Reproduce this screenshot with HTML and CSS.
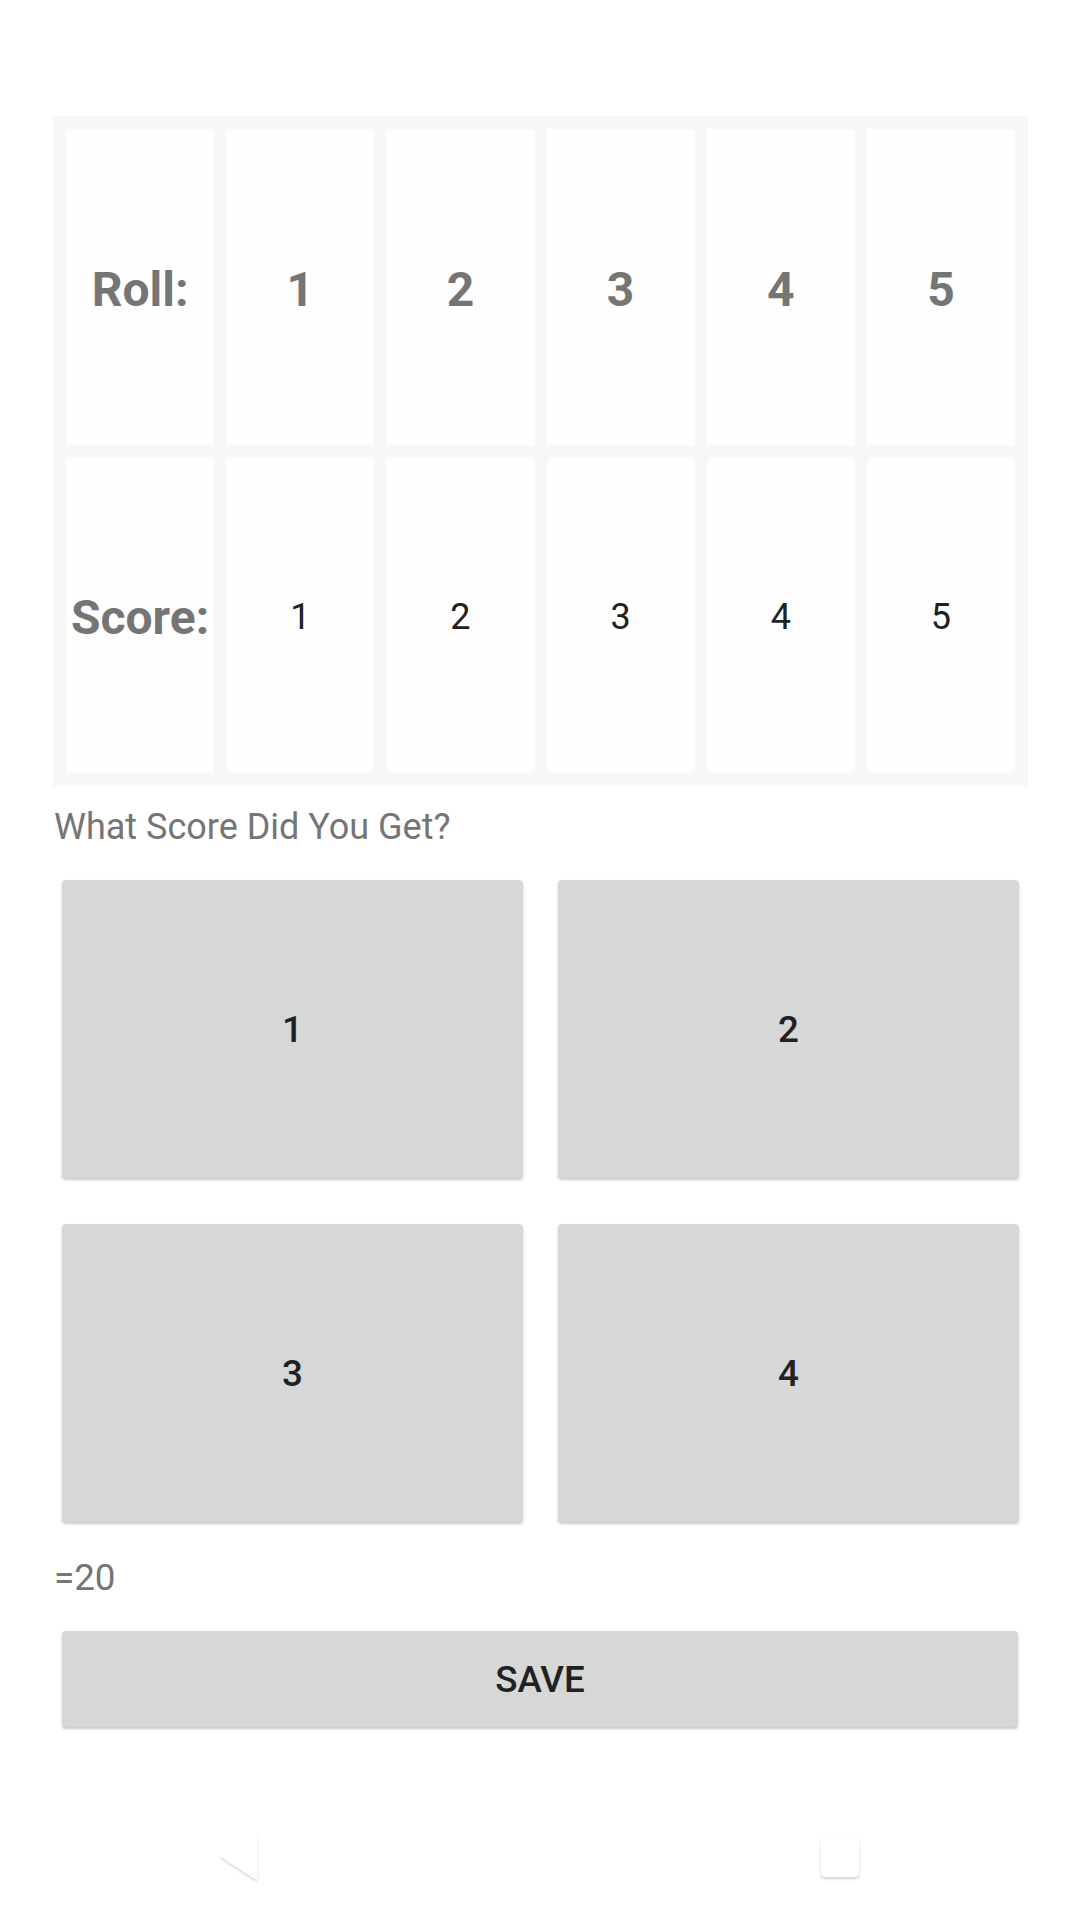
FILE: index.html
```html
<!DOCTYPE html>
<html>
<head>
<meta charset="utf-8">
<link rel="stylesheet" href="styles.css">
</head>
<body>
<div class="page">
  <div class="table">
    <div class="cell head">Roll:</div>
    <div class="cell head">1</div>
    <div class="cell head">2</div>
    <div class="cell head">3</div>
    <div class="cell head">4</div>
    <div class="cell head">5</div>
    <div class="cell head">Score:</div>
    <div class="cell val">1</div>
    <div class="cell val">2</div>
    <div class="cell val">3</div>
    <div class="cell val">4</div>
    <div class="cell val">5</div>
  </div>
  <div class="question">What Score Did You Get?</div>
  <div class="buttons">
    <div class="btn">1</div>
    <div class="btn">2</div>
    <div class="btn">3</div>
    <div class="btn">4</div>
  </div>
  <div class="total">=20</div>
  <div class="btn save">SAVE</div>
  <div class="nav">
    <div class="slot">
      <svg class="navicon" width="44" height="52" viewBox="0 0 44 52">
        <polygon points="38,3 38,47 4,25" fill="#ffffff" stroke="#ffffff" stroke-width="3" stroke-linejoin="round"/>
      </svg>
    </div>
    <div class="slot"></div>
    <div class="slot">
      <div class="square"></div>
    </div>
  </div>
</div>
</body>
</html>
```
FILE: styles.css
```css
html, body {
  margin: 0;
  padding: 0;
  background: #ffffff;
}
.page {
  width: 1080px;
  height: 1920px;
  display: flex;
  flex-direction: column;
  padding-top: 116px;
  box-sizing: border-box;
  font-family: Roboto, "Noto Sans", sans-serif;
}
.table {
  margin-left: 53px;
  width: 975px;
  box-sizing: border-box;
  padding: 13px;
  background: #f7f7f7;
  display: grid;
  grid-template-columns: repeat(6, 1fr);
  grid-template-rows: 316px 316px;
  gap: 12px;
}
.cell {
  background: #fefefe;
  display: flex;
  align-items: center;
  justify-content: center;
  padding-top: 4px;
  box-sizing: border-box;
}
.head {
  font-size: 48px;
  font-weight: 700;
  color: #757575;
}
.val {
  font-size: 36px;
  color: #212121;
  border-radius: 5px;
}
.table .head:nth-child(7) {
  border-radius: 0;
}
.question {
  margin: 20px 0 0 54px;
  font-size: 36px;
  line-height: 43px;
  color: #757575;
}
.buttons {
  margin: 31px 0 0 62px;
  display: grid;
  grid-template-columns: 461px 461px;
  grid-template-rows: 298px 298px;
  column-gap: 35px;
  row-gap: 46px;
}
.btn {
  background: #d6d7d7;
  border-radius: 4px;
  box-shadow: 0 2px 3px rgba(0, 0, 0, 0.22);
  display: flex;
  align-items: center;
  justify-content: center;
  font-size: 36.75px;
  font-weight: 500;
  color: #212121;
}
.total {
  margin: 34px 0 0 54px;
  font-size: 36.75px;
  line-height: 43px;
  color: #757575;
}
.save {
  margin: 32px 0 0 62px;
  width: 956px;
  height: 96px;
}
.nav {
  margin-top: auto;
  height: 126px;
  display: flex;
  justify-content: center;
  align-items: center;
}
.slot {
  width: 300px;
  display: flex;
  justify-content: center;
  align-items: center;
}
.navicon {
  filter: drop-shadow(0 2px 1px rgba(0, 0, 0, 0.14));
}
.square {
  width: 38px;
  height: 39px;
  background: #ffffff;
  border-radius: 4px;
  box-shadow: 0 2px 3px rgba(0, 0, 0, 0.16), 0 0 1px rgba(0, 0, 0, 0.08);
}
```
